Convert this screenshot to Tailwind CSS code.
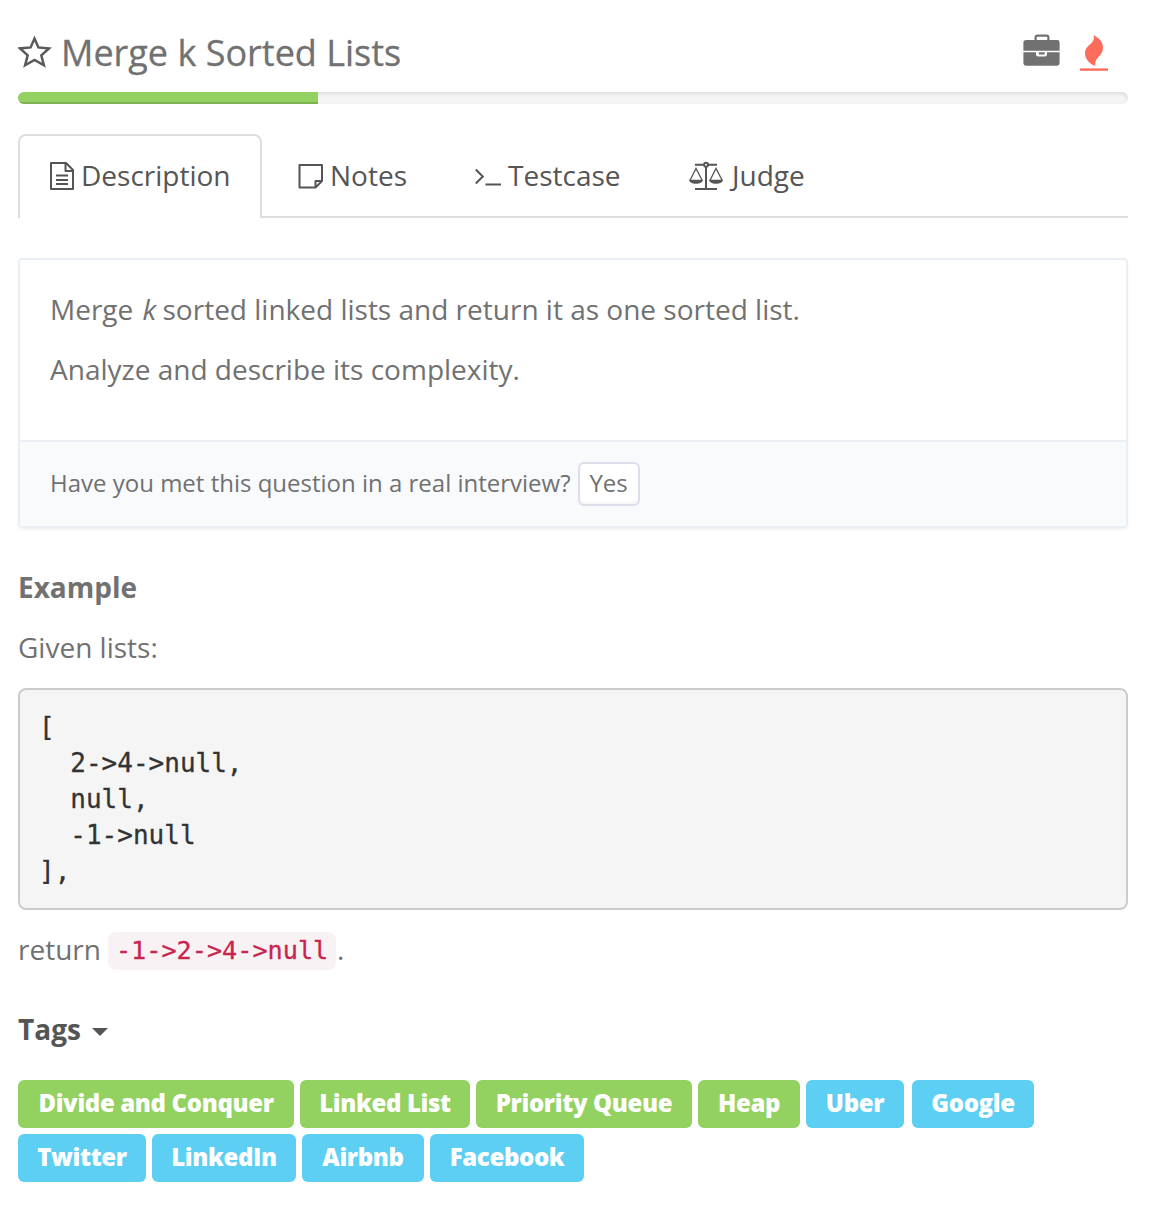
<!DOCTYPE html>
<html lang="en">
<head>
<meta charset="utf-8">
<title>Merge k Sorted Lists</title>
<script src="https://cdn.jsdelivr.net/npm/@tailwindcss/browser@4"></script>
</head>
<body class="bg-white px-[18px] w-[1146px] min-h-[1212px] font-['Open_Sans',sans-serif] text-[28px] leading-[40px] text-[#717171]">
  <header class="flex items-center h-[92px] pt-[12px]">
    <svg class="w-[34px] h-[34px] shrink-0" viewBox="0 0 34 34" fill="none" stroke="#5a5a5a" stroke-width="2.500"><path d="M16.500 3.600 20.400 12.400 31 13.400 23.300 20.300 25.900 30.300 16.500 25 7.100 30.300 9.700 20.300 2 13.400 12.600 12.400Z"/></svg>
    <h1 class="ml-[9px] pt-[2px] text-[36px] leading-[42px] whitespace-nowrap [-webkit-text-stroke:0.3px_#717171]">Merge k Sorted Lists</h1>
    <div class="ml-auto mr-[18px] flex">
      <svg class="w-[40px] h-[40px]" viewBox="0 0 40 40"><path fill="none" stroke="#717171" stroke-width="2.200" d="M13.600 8V5.500q0-1.900 1.900-1.900h9q1.900 0 1.900 1.900V8"/><path fill="#717171" d="M4.700 8h30.600q2.300 0 2.300 2.300v8.400H1.400v-8.400Q1.400 8 4.700 8ZM1.400 20.200H14v2.400q0 2 2 2h7q2 0 2-2v-2.400h12.600v10.500q0 3-3 3H4.400q-3 0-3-3ZM16.800 20.200h5.800v2.300h-5.800Z"/></svg>
      <svg class="ml-[14px] w-[34px] h-[40px]" viewBox="0 0 34 40" fill="#ff6c5c"><path d="M17.500 3C23 6 27 10 27 15.500C27 20 25 22.500 22 25.500C19.500 28 18.700 31 19.400 34C13 31.500 8.800 26.500 9 21C9.200 16.500 12 14 15 11.500C17.800 9 18.500 6 17.500 3Z"/><path d="M4 36.400h28v2.400H4z"/></svg>
    </div>
  </header>

  <div class="h-3 rounded-full bg-[#f5f5f5] overflow-hidden shadow-[inset_0_2px_4px_rgba(0,0,0,0.1)]">
    <div class="h-full w-[300px] bg-[#93d160] shadow-[inset_0_-2px_0_rgba(0,0,0,0.15)]"></div>
  </div>

  <nav class="mt-[30px] flex h-[84px] text-[#555]">
    <div class="w-[244px] border-2 border-b-0 border-[#ddd] rounded-t-lg flex items-center pl-[28px] pb-[2px]">
      <svg class="w-[28px] h-[32px]" viewBox="0 0 28 32" fill="none" stroke="#555" stroke-width="2"><path stroke-linejoin="round" d="M3 3h15l7 7v19H3ZM17.500 3v8H25"/><path d="M8 15.500h12M8 20h12M8 24h12"/></svg>
      <span class="ml-[5px] pb-[2px]">Description</span>
    </div>
    <div class="flex-1 border-b-2 border-[#ddd] flex items-center pt-[2px]">
      <div class="flex items-center w-[176px] pl-[36px]">
        <svg class="w-[26px] h-[28px]" viewBox="0 0 26 28" fill="none" stroke="#555" stroke-width="2" stroke-linejoin="round"><path d="M1.500 3h22.500v16l-6.500 6.500h-16ZM17.500 25.500V19H24"/></svg>
        <span class="ml-[6px] pb-[2px]">Notes</span>
      </div>
      <div class="flex items-center w-[214px] pl-[36px]">
        <svg class="w-[28px] h-[28px]" viewBox="0 0 28 28" fill="none" stroke="#555" stroke-width="2"><path d="m1.800 7.500 7 7-7 7M11.500 22.500H27"/></svg>
        <span class="ml-[6px] pb-[2px]">Testcase</span>
      </div>
      <div class="flex items-center pl-[36px]">
        <svg class="w-[36px] h-[32px]" viewBox="0 0 36 32" fill="none" stroke="#555" stroke-width="2"><path d="M7 4.800H15M20 4.800h9M7 29H29M18 7v22"/><circle cx="18" cy="4.800" r="2"/><path stroke-width="1.300" d="M2.200 20 8 8.500 14 20M22.200 20 28 8.500 34 20"/><path fill="#555" stroke="none" d="M1 19.800h14c-.5 5.300-13.500 5.300-14 0ZM21 19.800h14c-.5 5.300-13.500 5.300-14 0Z"/></svg>
        <span class="ml-[8px] pb-[2px]">Judge</span>
      </div>
    </div>
  </nav>

  <section class="mt-[40px] border-2 border-[#eaeff5] rounded shadow-[0_2px_3px_rgba(0,0,0,0.05)]">
    <div class="h-[180px] px-[30px] pt-[29px]">
      <p>Merge <em class="ml-[2px] -mr-px">k</em> sorted linked lists and return it as one sorted list.</p>
      <p class="mt-5">Analyze and describe its complexity.</p>
    </div>
    <div class="h-[86px] border-t-2 border-[#eaeff5] bg-[#f9fafc] flex items-center px-[30px] text-[24px]">
      <span class="whitespace-nowrap pb-[2px]">Have you met this question in a real interview?</span>
      <button class="ml-[7px] w-[62px] h-[44px] shrink-0 border-2 border-[#dcdee9] rounded-md bg-white leading-[36px] pb-[2px] shadow-[inset_0_-2px_2px_rgba(0,0,0,0.04)]">Yes</button>
    </div>
  </section>

  <h2 class="mt-[39px] font-bold">Example</h2>
  <p class="mt-5">Given lists:</p>
  <pre class="mt-[21px] h-[222px] border-2 border-[#ccc] rounded-lg bg-[#f5f5f5] p-[19px] font-['DejaVu_Sans_Mono',monospace] text-[26px] leading-[36px] text-[#333] [-webkit-text-stroke:0.3px_#333]">[
  2-&gt;4-&gt;null,
  null,
  -1-&gt;null
],</pre>
  <div class="mt-5 flex items-center h-10">
    <span class="pb-[2px]">return</span>
    <code class="mt-[2px] ml-[7px] mr-px w-[228px] h-[38px] rounded-lg bg-[#f9f2f4] px-[8px] font-['DejaVu_Sans_Mono',monospace] text-[25.200px] leading-[38px] text-[#c7254e] whitespace-nowrap [-webkit-text-stroke:0.3px_#c7254e]">-1-&gt;2-&gt;4-&gt;null</code>
    <span class="pb-[2px]">.</span>
  </div>

  <div class="mt-[40px] flex items-center h-10 text-[#555]">
    <h2 class="font-bold pb-[2px]">Tags</h2>
    <div class="ml-[11px] mt-1 border-x-8 border-t-8 border-x-transparent border-t-[#555]"></div>
  </div>
  <div class="mt-[30px] flex flex-wrap gap-[6px] text-[24px] leading-[46px] tracking-[-0.36px] font-extrabold text-white text-center whitespace-nowrap">
    <span class="w-[276px] h-12 rounded-md bg-[#93d160]">Divide and Conquer</span>
    <span class="w-[170px] h-12 rounded-md bg-[#93d160]">Linked List</span>
    <span class="w-[216px] h-12 rounded-md bg-[#93d160]">Priority Queue</span>
    <span class="w-[102px] h-12 rounded-md bg-[#93d160]">Heap</span>
    <span class="w-[98px] h-12 rounded-md bg-[#5dcff3]">Uber</span>
    <span class="ml-[2px] mr-[60px] w-[122px] h-12 rounded-md bg-[#5dcff3]">Google</span>
    <span class="w-[128px] h-12 rounded-md bg-[#5dcff3]">Twitter</span>
    <span class="w-[144px] h-12 rounded-md bg-[#5dcff3]">LinkedIn</span>
    <span class="w-[122px] h-12 rounded-md bg-[#5dcff3]">Airbnb</span>
    <span class="w-[154px] h-12 rounded-md bg-[#5dcff3]">Facebook</span>
  </div>
</body>
</html>
